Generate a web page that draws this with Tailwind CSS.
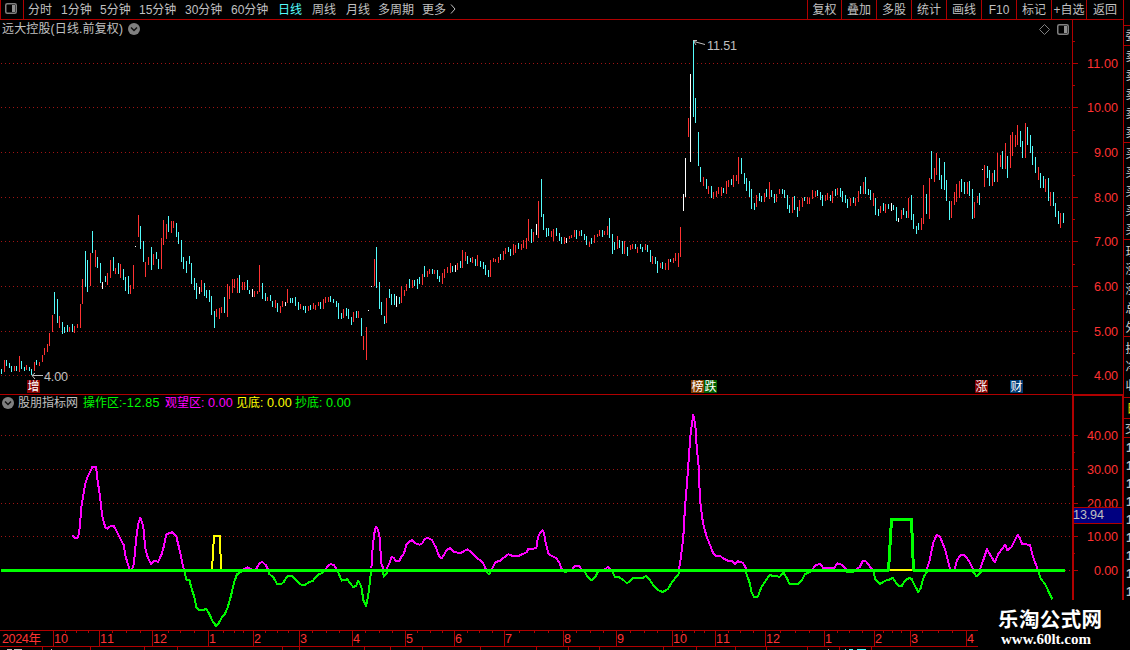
<!doctype html>
<html lang="zh-CN">
<head>
    <meta charset="UTF-8">
    <meta name="viewport" content="width=device-width, initial-scale=1">
    <title>远大控股 日线</title>
    <script src="https://cdn.jsdelivr.net/npm/@tailwindcss/browser@4"></script>
</head>
<body class="bg-black text-[#c0c0c0] font-['Liberation_Sans','Noto_Sans_CJK_SC',sans-serif] text-[12px] leading-none w-[1130px] h-[650px] overflow-hidden">
<div class="flex h-[650px]">
    <div class="w-[1123px] flex flex-col shrink-0">
        <header class="h-5 flex justify-between border-b border-[#b00000] whitespace-nowrap">
            <nav class="flex items-center">
                <div class="w-6 h-[19px] border-x border-[#b00000] flex items-center justify-center mr-1">
                    <svg class="w-3 h-[11px] -translate-x-px -translate-y-px" viewBox="0 0 12 11"><rect x=".75" y=".75" width="10.5" height="9.5" rx="1.5" fill="none" stroke="#808080" stroke-width="1.5"/><rect x="7" y="2" width="3" height="7" fill="#909090"/></svg>
                </div>
                <span class="w-[33px]">分时</span>
                <span class="w-[39px]">1分钟</span>
                <span class="w-[39px]">5分钟</span>
                <span class="w-[46px]">15分钟</span>
                <span class="w-[46px]">30分钟</span>
                <span class="w-[47px]">60分钟</span>
                <span class="w-[34px] text-[#54fcfc]">日线</span>
                <span class="w-[34px]">周线</span>
                <span class="w-[32px]">月线</span>
                <span class="w-[44px]">多周期</span>
                <span class="w-[28px]">更多</span>
                <svg class="w-[6px] h-[10px] -translate-y-px" viewBox="0 0 6 10"><path d="M1 .5L5 5L1 9.5" fill="none" stroke="#c0c0c0"/></svg>
            </nav>
            <nav class="flex text-center leading-[21px] h-[19px]">
                <span class="w-[34px] border-l border-[#b00000]">复权</span>
                <span class="w-[35px] border-l border-[#b00000]">叠加</span>
                <span class="w-[35px] border-l border-[#b00000]">多股</span>
                <span class="w-[35px] border-l border-[#b00000]">统计</span>
                <span class="w-[35px] border-l border-[#b00000]">画线</span>
                <span class="w-[35px] border-l border-[#b00000]">F10</span>
                <span class="w-[35px] border-l border-[#b00000]">标记</span>
                <span class="w-[35px] border-l border-[#b00000]">+自选</span>
                <span class="w-[37px] border-l border-[#b00000]">返回</span>
            </nav>
        </header>

        <section class="relative h-[374px]">
            <svg id="price" class="block w-[1123px] h-[374px]" viewBox="0 20 1123 374"></svg>
            <div class="absolute left-[2px] top-[3px] flex items-center gap-[5px]">
                <h1 class="w-[121px] whitespace-nowrap tracking-[.15px]">远大控股(日线.前复权)</h1>
                <svg class="w-3 h-3" viewBox="0 0 12 12"><circle cx="6" cy="6" r="6" fill="#808080"/><path d="M3 4.5L6 7.5L9 4.5" fill="none" stroke="#111" stroke-width="1.5"/></svg>
            </div>
            <div class="absolute left-[1039px] top-1 flex items-center gap-[7px]">
                <svg class="w-[11px] h-[11px]" viewBox="0 0 11 11"><path d="M5.5 .5L10.5 5.5L5.5 10.5L.5 5.5Z" fill="none" stroke="#808080"/></svg>
                <svg class="w-3 h-[11px]" viewBox="0 0 12 11"><rect x=".75" y=".75" width="10.5" height="9.5" rx="1.5" fill="none" stroke="#808080" stroke-width="1.5"/><rect x="7" y="2" width="3" height="7" fill="#909090"/></svg>
            </div>
            <span class="absolute left-[27px] top-[360px] w-[13px] h-[13px] bg-[#800000] text-white leading-[14px] text-center">增</span>
            <span class="absolute left-[691px] top-[360px] w-[13px] h-[13px] bg-[#803c00] text-white leading-[14px] text-center">榜</span>
            <span class="absolute left-[704px] top-[360px] w-[13px] h-[13px] bg-[#006000] text-white leading-[14px] text-center">跌</span>
            <span class="absolute left-[975px] top-[360px] w-[13px] h-[13px] bg-[#800000] text-white leading-[14px] text-center">涨</span>
            <span class="absolute left-[1010px] top-[360px] w-[13px] h-[13px] bg-[#003c74] text-white leading-[14px] text-center">财</span>
        </section>

        <section class="relative h-[256px]">
            <svg id="indicator" class="block w-[1123px] h-[256px]" viewBox="0 394 1123 256"></svg>
            <div class="absolute left-[2px] top-[3px] flex items-center whitespace-nowrap">
                <svg class="w-3 h-3 mr-1" viewBox="0 0 12 12"><circle cx="6" cy="6" r="6" fill="#808080"/><path d="M3 4.5L6 7.5L9 4.5" fill="none" stroke="#111" stroke-width="1.5"/></svg>
                <span class="w-[65px]">股朋指标网</span>
                <span class="w-[82px] text-[#00f800]">操作区:<span class="text-[12.6px] tracking-[.3px]">-12.85</span></span>
                <span class="w-[71px] text-[#ff00ff]">观望区:<span class="text-[12.6px] tracking-[.1px]"> 0.00</span></span>
                <span class="w-[59px] text-[#ffff00]">见底:<span class="text-[12.6px] tracking-[.1px]"> 0.00</span></span>
                <span class="text-[#00f800]">抄底:<span class="text-[12.6px] tracking-[.1px]"> 0.00</span></span>
            </div>
        </section>
    </div>

    <aside class="w-[7px] h-[650px] overflow-hidden border-l border-[#b00000]">
        <svg id="side" class="block w-[6px] h-[650px]" viewBox="1124 0 6 650"></svg>
    </aside>
</div>

<div class="absolute left-[978px] top-[600px] w-[152px] h-[50px] bg-black text-white font-bold whitespace-nowrap">
    <svg class="block w-[152px] h-[50px]" viewBox="978 600 152 50" fill="#fff">
        <text x="998" y="627" font-size="20.5" textLength="104" font-family="Noto Sans CJK SC, sans-serif">乐淘公式网</text>
        <text x="1001" y="644" font-size="14.5" textLength="90" lengthAdjust="spacingAndGlyphs" font-family="Liberation Serif, serif">www.60lt.com</text>
    </svg>
</div>

<script>
    const RED = '#b00000';
    const colors = {r: '#ff3232', c: '#54fcfc', w: '#ffffff'};

    // bars: [left, top, list]; list entries are colour + x,high,low in thirds of a pixel
    const bars = [
        [0, 200, 'c4,507,522 r13,480,516 c19,480,498 c28,489,504 c34,498,516 r43,498,513 c49,498,513 r58,468,516 c64,483,507 c73,501,513 r79,495,510 c88,501,513 c94,507,525 r103,486,513 c109,480,495 r118,486,498 r127,465,486 r133,444,465 r142,432,456 r148,399,438 r157,345,396 c163,276,342 c172,297,369 r178,348,384 c187,366,402 c193,381,399 c202,375,396 r208,381,396 c217,372,396 r223,378,399 r232,372,384 r241,312,384 r247,237,312 c256,153,261 c262,180,276 r271,159,258 c277,93,159 r286,150,201 c292,171,204 c301,189,249 w307,246,267 c316,228,246 r322,219,255 r331,180,234 c340,171,213 r346,204,222 c355,189,222 r361,192,234 c370,207,240 c376,231,273 c385,228,282 r391,255,282 r400,195,267 w406,138,141 r415,45,111 c421,78,147 c430,123,186 r436,186,231 r445,171,195 c454,141,210 r460,162,195 c469,156,177 c475,177,207 r484,114,207 r490,60,135 r499,72,117 c505,48,96 r514,63,99 r520,63,84 c529,69,111 c535,96,132 c544,120,186 c550,171,207 c559,183,219 c568,168,192 c574,189,252 c583,234,270 c589,249,297 w598,261,282 r604,240,276 c613,249,288 c619,270,294 c628,270,306 c634,288,345 c643,333,384 r649,327,351 r658,324,357 r664,321,339 c673,291,339 r682,252,351 r688,258,297'],
        [230, 220, 'r7,177,219 r13,177,204 r22,174,219 c28,165,219 r37,186,210 r43,186,210 c52,180,210 c58,210,222 w67,207,231 r73,213,231 r82,213,222 r88,135,216 c97,189,237 c106,219,243 r112,231,243 c121,225,243 c127,243,261 r136,240,264 c142,249,276 r151,258,279 r157,243,261 w166,246,258 r172,207,249 c181,234,249 c187,234,249 c196,231,258 c205,246,270 r211,252,267 c220,258,270 c226,258,279 r235,258,273 c241,255,270 r250,249,267 r256,255,270 r265,246,258 c271,246,267 r280,237,267 r286,231,249 r295,231,246 c301,228,246 c310,237,249 c319,243,261 c325,249,297 c334,279,297 r340,267,294 c349,264,288 c355,267,297 c364,291,315 r370,276,306 c379,273,294 r385,273,294 c394,294,348 r400,348,390 r409,321,420 w415,270,273 w424,198,201 r433,117,198 c439,81,204 c448,186,267 c454,246,285 c463,288,312 r469,234,309 c478,207,234 c484,222,255 c493,222,255 w499,228,261 c508,231,252 r514,198,249 r523,210,228 r529,192,213 c538,177,204 r547,180,204 c553,180,198 c562,177,207 c568,171,192 r577,162,195 c583,138,171 r592,153,171 r598,147,162 c607,147,162 r613,150,162 c622,150,177 c628,168,186 r637,159,192 r643,147,174 r652,141,159 r661,129,159 c667,138,156 w676,135,156 r682,129,150 c691,123,144 r697,90,144 r706,96,123 c712,108,132'],
        [460, 170, 'c31,264,276 r37,261,279 c46,267,288 r52,255,288 c61,273,291 c70,276,297 c76,285,315 c85,300,321 r91,270,321 r100,264,276 r106,267,276 r115,261,279 c121,252,270 r130,243,270 r136,234,252 c145,231,246 c151,237,258 r160,222,255 r166,225,249 c175,219,237 r184,222,240 r190,210,234 r199,204,237 r205,147,213 c214,177,219 r220,186,216 w229,162,195 r235,93,204 c244,27,141 c250,132,180 c259,174,201 c265,174,198 r274,183,201 r280,177,213 c289,174,198 c298,189,213 c304,201,222 r313,201,222 w319,204,219 r328,198,207 r334,195,204 r343,180,201 c349,180,207 r358,183,198 c364,180,198 c373,192,210 c379,198,225 r388,216,231 c394,204,222 r403,195,219 r412,192,201 r418,180,198 c427,180,201 r433,183,195 r442,168,195 c448,144,204 c457,192,252 c463,216,240 r472,198,237 c478,210,234 c487,213,252 r493,213,252 c502,231,258 r511,225,240 r517,222,237 c526,222,237 r532,231,249 c541,222,237 c547,231,246 r556,222,240 c562,225,246 c571,240,276 r577,258,282 c586,261,282 c592,273,309 r601,279,294 c607,276,297 r616,279,300 r625,267,300 c631,267,276 r640,264,279 r646,249,273 r655,249,291 r661,171,261 w670,72,123'],
        [660, 30, 'w76,384,501 r85,264,321 w91,132,396 c100,30,261 c106,204,279 c115,306,408 c121,411,456 r130,441,468 c139,447,477 r145,468,492 c154,468,504 r160,486,507 r169,483,501 r175,471,492 r184,471,498 c190,474,489 r199,453,492 r205,450,471 c214,447,465 r220,435,471 r229,435,453 r235,381,462 c244,384,432 c253,429,462 c259,444,483 c268,453,501 c274,477,537 c283,519,540 r289,495,531 c298,489,513 c304,498,516 r313,489,516 c319,477,501 r328,456,507 c334,480,501 c343,492,519 r349,492,516 r358,477,492 c367,477,492 c373,480,504 c382,495,537 c388,525,549 r397,501,549 c403,498,540 c412,531,561 r418,510,543 r427,504,531 c433,501,513 r442,501,522 r448,504,522 r457,480,507 r466,483,501 c472,480,498 c481,486,510 c487,495,528 r496,495,513 r502,489,510 c511,495,513 r517,483,519 c526,477,498 r532,474,495 c541,474,501 c547,483,516 c556,495,519 c562,507,534 r571,504,528 c580,501,519 r586,504,528 r595,483,516'],
        [860, 110, 'c1,228,252 r10,216,252 c16,201,252 c25,237,255 c31,240,270 r40,249,288 c46,264,315 c55,297,318 r61,288,309 c70,279,303 r76,282,309 c85,282,297 w94,279,303 c100,285,300 c109,291,333 w115,324,336 r124,300,327 c130,294,315 c139,303,324 r145,264,324 c154,255,330 c160,312,357 c169,348,372 c175,339,360 r184,324,360 r190,225,342 c199,252,312 r208,204,327 c214,123,207 r223,174,216 r229,129,195 c238,144,210 c244,195,237 c253,156,240 c259,210,273 c268,273,330 r274,273,324 r283,246,285 r289,222,276 r298,213,264 c304,207,246 c313,216,252 r322,216,252 c328,213,258 c337,237,327 r343,276,324 r352,258,279 c358,249,285 w367,177,180 r373,165,231 c382,168,204 c388,180,228 r397,189,228 c403,180,216 r412,129,216 r421,135,171 c427,123,177 r436,99,177 c442,138,204 r451,75,174 r457,66,138 r466,75,111 r472,45,105 c481,63,111 c487,93,144 r496,39,144 c502,51,105 c511,75,129 c517,108,165 c526,141,189 r535,171,210 c541,189,234 c550,198,234 r556,207,246 c565,204,273 r571,246,288 c580,246,288 c586,279,321 c595,303,342 r601,309,354 c610,309,339'],
    ];

    // indicator curves, same units: m = above zero, g = below zero
    const curves = [
        [0, 390, {
            m: ['217,437 225,443 234,443 240,408 244,350 256,280 262,263 277,231 288,231 292,265 300,320 307,380 316,412 322,416 333,407 342,409 352,428 371,465 377,500 389,539 396,539 402,520 408,450 415,400 421,383 430,410 436,475 444,505 454,522 463,513 475,515 486,490 492,467 499,433 516,427 529,440 540,485 546,515 552,541', '731,538 742,532 754,538', '768,538 778,520 787,516 797,525 805,541', '975,541 982,530 992,522 1002,526 1012,541'],
            g: ['552,541 560,570 568,570 576,600 583,620 589,652 598,660 611,660 618,656 628,672 637,692 649,709 661,692 665,683 674,673 683,653 693,617 703,575 711,553 720,547 733,541', '803,541 808,552 820,562 831,581 843,583 852,575 860,560 875,557 885,567 895,577 905,585 915,585 926,577 938,573 955,553 966,550 975,541', '1012,541 1025,572 1042,568 1052,582 1060,591 1068,588 1075,572 1084,590 1090,630 1098,648 1104,620 1108,590 1113,545'],
        }],
        [360, 400, {
            m: ['33,505 36,490 38,440 43,400 48,380 54,390 60,418 63,487 70,507', '80,507 88,490 95,470 102,475 108,483 118,483 124,470 132,460 139,435 150,424 157,420 166,430 178,434 186,431 195,416 204,414 216,420 228,443 238,470 245,475 252,465 260,450 270,445 280,455 300,460 322,448 334,457 344,468 368,487 378,508', '396,508 406,487 420,482 430,474 445,463 458,468 477,467 500,457 505,447 529,445 534,410 540,400 547,391 552,398 556,425 565,460 575,468 588,474 598,487 604,505 608,511', '636,507 645,498 656,497 664,507', '735,508 743,501 752,508', '957,507 963,470 970,410 975,320 981,250 987,165 992,100 1000,44 1006,75 1010,140 1016,200 1020,300 1029,370 1040,410 1052,440 1060,460 1067,468 1080,467'],
            g: ['66,511 72,530 80,520 86,511', '378,513 386,523 396,511', '608,513 618,516 628,511', '674,515 684,532 695,541 706,530 714,515', '758,515 764,530 777,531 790,540 800,549 808,546 820,533 850,533 858,528 868,537 878,553 892,569 908,576 924,567 934,550 945,535 955,525 959,511'],
        }],
        [720, 480, {
            m: ['0,227 10,236 24,242 36,242 45,253 54,244 68,248 80,268', '278,268 288,254 302,253 310,265 342,264 352,250 364,254 378,268', '410,268 420,260 428,243 436,242 444,252 456,268', '620,268 628,245 640,188 650,164 660,170 676,210 690,268', '704,268 710,243 722,224 733,224 745,240 760,268'],
            g: ['76,273 88,305 95,338 102,351 113,351 125,320 140,298 150,284 158,288 180,290 190,277 200,293 208,311 236,311 245,301 255,283 275,273', '378,275 403,275', '460,275 467,300 480,312 496,302 508,299 518,293 526,305 536,318 545,318 556,301 568,294 575,297 585,318 595,336 602,325 608,300 614,285 624,272', '758,275 770,289 784,275'],
        }],
        [950, 380, {
            m: ['90,568 100,540 111,507 120,524 134,547 146,520 166,494 172,511 184,502 203,465 210,475 216,491 240,495 248,528 263,568'],
            g: ['265,575 273,598 284,610 296,635 307,658'],
        }],
    ];

    const rect = (x, y, w, h, fill) => `<rect x="${x}" y="${y}" width="${w}" height="${h}" fill="${fill}"/>`;
    const label = (x, y, len, text, fill) => `<text x="${x}" y="${y}" font-size="12.6" textLength="${len}" fill="${fill}">${text}</text>`;
    const dots = (y) => `<path d="M1 ${y + .5}H1072" stroke="#a01414" stroke-dasharray="1 3" shape-rendering="crispEdges"/>`;

    // price pane
    let out = '';
    [63, 107, 152, 197, 241, 286, 331, 375].forEach((y, i) => {
        out += dots(y) + rect(1073, y, 5, 1, RED);
        out += i < 2 ? label(1087, y + 5, 31, (11 - i) + '.00', '#ff3232') : label(1094, y + 5, 24, (11 - i) + '.00', '#ff3232');
    });
    [41, 85, 130, 175, 219, 264, 309, 353].forEach(y => out += rect(1073, y, 2, 1, RED));
    out += rect(1072, 20, 1, 374, RED);
    bars.forEach(([left, top, list]) => {
        list.split(' ').forEach(item => {
            const [x, hi, lo] = item.slice(1).split(',').map(Number);
            out += rect(left + Math.floor(x / 3), top + hi / 3, 1, (lo - hi) / 3, colors[item[0]]);
        });
    });
    out += '<path d="M32 375.5H43M32 375.5L35 373M32 375.5L35 379M694 41.5L705 44.5M693 40.5H697M694 42L696 45" fill="none" stroke="#c0c0c0"/>';
    out += label(44, 381, 24, '4.00', '#c0c0c0') + label(707, 50, 30, '11.51', '#c0c0c0');
    document.getElementById('price').innerHTML = out;

    // indicator pane
    out = rect(0, 394, 1123, 1, RED);
    [435, 469, 503, 536].forEach((y, i) => {
        out += dots(y) + rect(1074, y, 4, 1, RED) + label(1087, y + 5, 31, (40 - i * 10) + '.00', '#ff3232');
    });
    out += dots(570) + rect(1074, 570, 4, 1, RED) + label(1094, 575, 24, '0.00', '#ff3232');
    [452, 486, 520, 553].forEach(y => out += rect(1074, y, 1, 1, RED));
    out += rect(1072, 394, 51, 2, RED) + rect(1072, 394, 2, 206, RED) + rect(1122, 394, 1, 206, RED);
    out += rect(1074, 507, 48, 17, RED) + rect(1074, 508, 48, 15, '#000080') + label(1073, 519, 31, '13.94', '#c0c0c0');
    curves.forEach(([left, top, sets]) => {
        for (const key in sets) {
            sets[key].forEach(points => {
                out += `<polyline transform="translate(${left} ${top}) scale(.33333)" points="${points}" fill="none" stroke="${key === 'm' ? '#ff00ff' : '#00f800'}" stroke-width="6" stroke-linejoin="round" shape-rendering="crispEdges"/>`;
            });
        }
    });
    out += '<polyline points="212,570 214,536 220,536 221,570" fill="none" stroke="#ffff00" stroke-width="2" shape-rendering="crispEdges"/>';
    out += rect(1, 569, 888, 3, '#00ff00') + rect(913, 569, 152, 3, '#00ff00') + rect(889, 569, 24, 2, '#ffff00');
    out += '<polyline points="888.5,571 891.5,519.5 911.5,519.5 913.5,571" fill="none" stroke="#00ff00" stroke-width="3" shape-rendering="crispEdges"/>';

    // time axis
    out += rect(0, 630, 978, 1, RED) + rect(0, 646, 978, 1, RED) + label(2, 643, 39, '2024年', '#ff3232');
    const months = [[53, 10], [99, 11], [152, 12], [208, 1], [253, 2], [299, 3], [352, 4], [405, 5], [454, 6], [504, 7], [563, 8], [616, 9], [672, 10], [715, 11], [765, 12], [824, 1], [874, 2], [910, 3], [966, 4]];
    months.forEach(([x, m]) => out += rect(x, 631, 1, 15, RED) + label(x + 1, 643, m > 9 ? 14 : 7, m, '#ff3232'));
    [65, 76, 88, 112, 126, 140, 168, 180, 194, 223, 234, 243, 265, 277, 288, 312, 326, 339, 365, 379, 392, 417, 430, 442, 467, 479, 492, 519, 534, 548, 576, 590, 603, 630, 644, 657, 682, 694, 704, 728, 740, 753, 780, 795, 809, 837, 849, 862, 883, 892, 901, 922, 938, 952].forEach(x => out += rect(x, 631, 1, 2, RED));
    [42, 90, 144, 177, 282, 299, 364, 390, 422, 480, 536, 568, 599, 663, 696, 735, 766, 807, 839, 871].forEach(x => out += rect(x, 647, 1, 3, RED));
    out += rect(7, 649, 5, 1, '#c0c0c0') + rect(14, 649, 8, 1, '#c0c0c0') + rect(51, 649, 1, 1, '#c0c0c0');
    out += rect(828, 649, 1, 1, '#c0c0c0') + rect(845, 649, 1, 1, '#54fcfc') + rect(849, 649, 4, 1, '#54fcfc') + rect(857, 649, 9, 1, '#54fcfc');
    document.getElementById('indicator').innerHTML = out;

    // left edge of the quote panel
    out = '';
    [25, 45, 142, 239, 336, 397, 418, 437].forEach(y => out += rect(1124, y, 6, 1, RED));
    [[40, '委'], [61, '卖'], [80, '卖'], [99, '卖'], [118, '卖'], [137, '卖'], [158, '买'], [177, '买'], [196, '买'], [215, '买'], [234, '买'], [256, '现'], [274, '涨'], [294, '涨'], [313, '总'], [332, '外'], [353, '换'], [371, '净'], [390, '收']].forEach(([y, t]) => {
        out += `<text x="1125.5" y="${y}" font-size="12" fill="#d0d0d0">${t}</text>`;
    });
    out += '<text x="1126.5" y="413" font-size="12" fill="#e0e000">日</text><text x="1125" y="433" font-size="12" fill="#c0c0c0">交</text>';
    [452, 470, 488, 506, 524, 542, 560, 578, 596].forEach(y => out += `<text x="1126" y="${y}" font-size="13" font-weight="bold" fill="#c0c0c0">1</text>`);
    document.getElementById('side').innerHTML = out;
</script>
</body>
</html>
